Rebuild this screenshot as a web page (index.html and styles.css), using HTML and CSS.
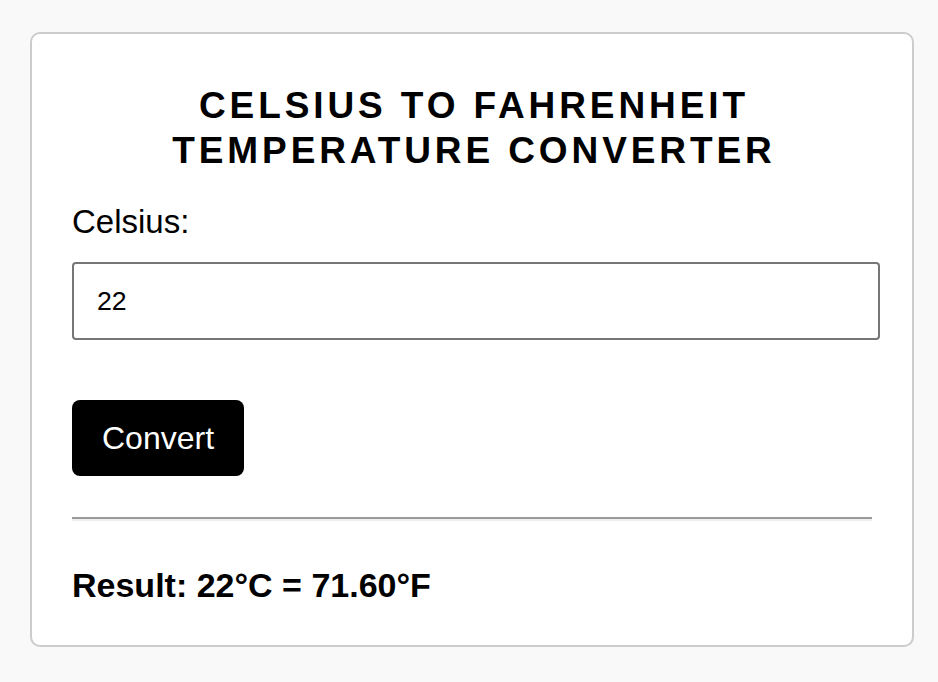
FILE: index.html
```html
<!DOCTYPE html>
<html lang="en">
<head>
    <meta charset="UTF-8">
    <meta name="viewport" content="width=device-width, initial-scale=1.0">
    <title>Temperature Converter</title>

    <link rel="stylesheet" href="styles.css">
</head>
<body>
    <div class="converter">
        <h1 class="title">Celsius to Fahrenheit Temperature Converter</h1>

        <label class="field_label" for="celsius">Celsius:</label>
        <input class="field_input" id="celsius" type="number" value="22">

        <button class="convert_btn" type="button">Convert</button>

        <hr class="divider">

        <p class="result">Result: 22°C = 71.60°F</p>
    </div>
</body>
</html>
```

FILE: styles.css
```css
body
{
    margin: 0px;
    background-color: #f9f9f9;
    font-family: "Liberation Sans", Arial, sans-serif;
    color: #000000;
}

.converter
{
    width: 800px;
    margin: 32px 0px 0px 30px;
    padding: 40px;
    background-color: #ffffff;
    border: 2px solid #cccccc;
    border-radius: 10px;
}

.title
{
    margin: 9px 0px 30px 0px;
    padding-left: 3.9px;
    font-size: 37px;
    line-height: 45px;
    font-weight: bold;
    letter-spacing: 3.9px;
    text-align: center;
    text-transform: uppercase;
}

.field_label
{
    display: block;
    font-size: 33px;
    line-height: 37px;
}

.field_input
{
    display: block;
    box-sizing: border-box;
    width: 808px;
    height: 78px;
    margin-top: 22px;
    padding: 0px 23px;
    font-family: inherit;
    font-size: 26.67px;
    color: #000000;
    background-color: #ffffff;
    border: 2px solid #767676;
    border-radius: 4px;
    outline: none;
    -moz-appearance: textfield;
}

.field_input::-webkit-outer-spin-button,
.field_input::-webkit-inner-spin-button
{
    -webkit-appearance: none;
    margin: 0px;
}

.convert_btn
{
    display: block;
    margin-top: 60px;
    padding: 20px 30px;
    font-family: inherit;
    font-size: 32px;
    line-height: 36px;
    color: #ffffff;
    background-color: #000000;
    border: none;
    border-radius: 8px;
    cursor: pointer;
}

.divider
{
    height: 0px;
    margin: 41px 0px 0px 0px;
    border: none;
    border-top: 2px solid #9a9a9a;
    border-bottom: 2px solid #eeeeee;
}

.result
{
    margin: 45px 0px 0px 0px;
    font-size: 34px;
    font-weight: bold;
}
```
